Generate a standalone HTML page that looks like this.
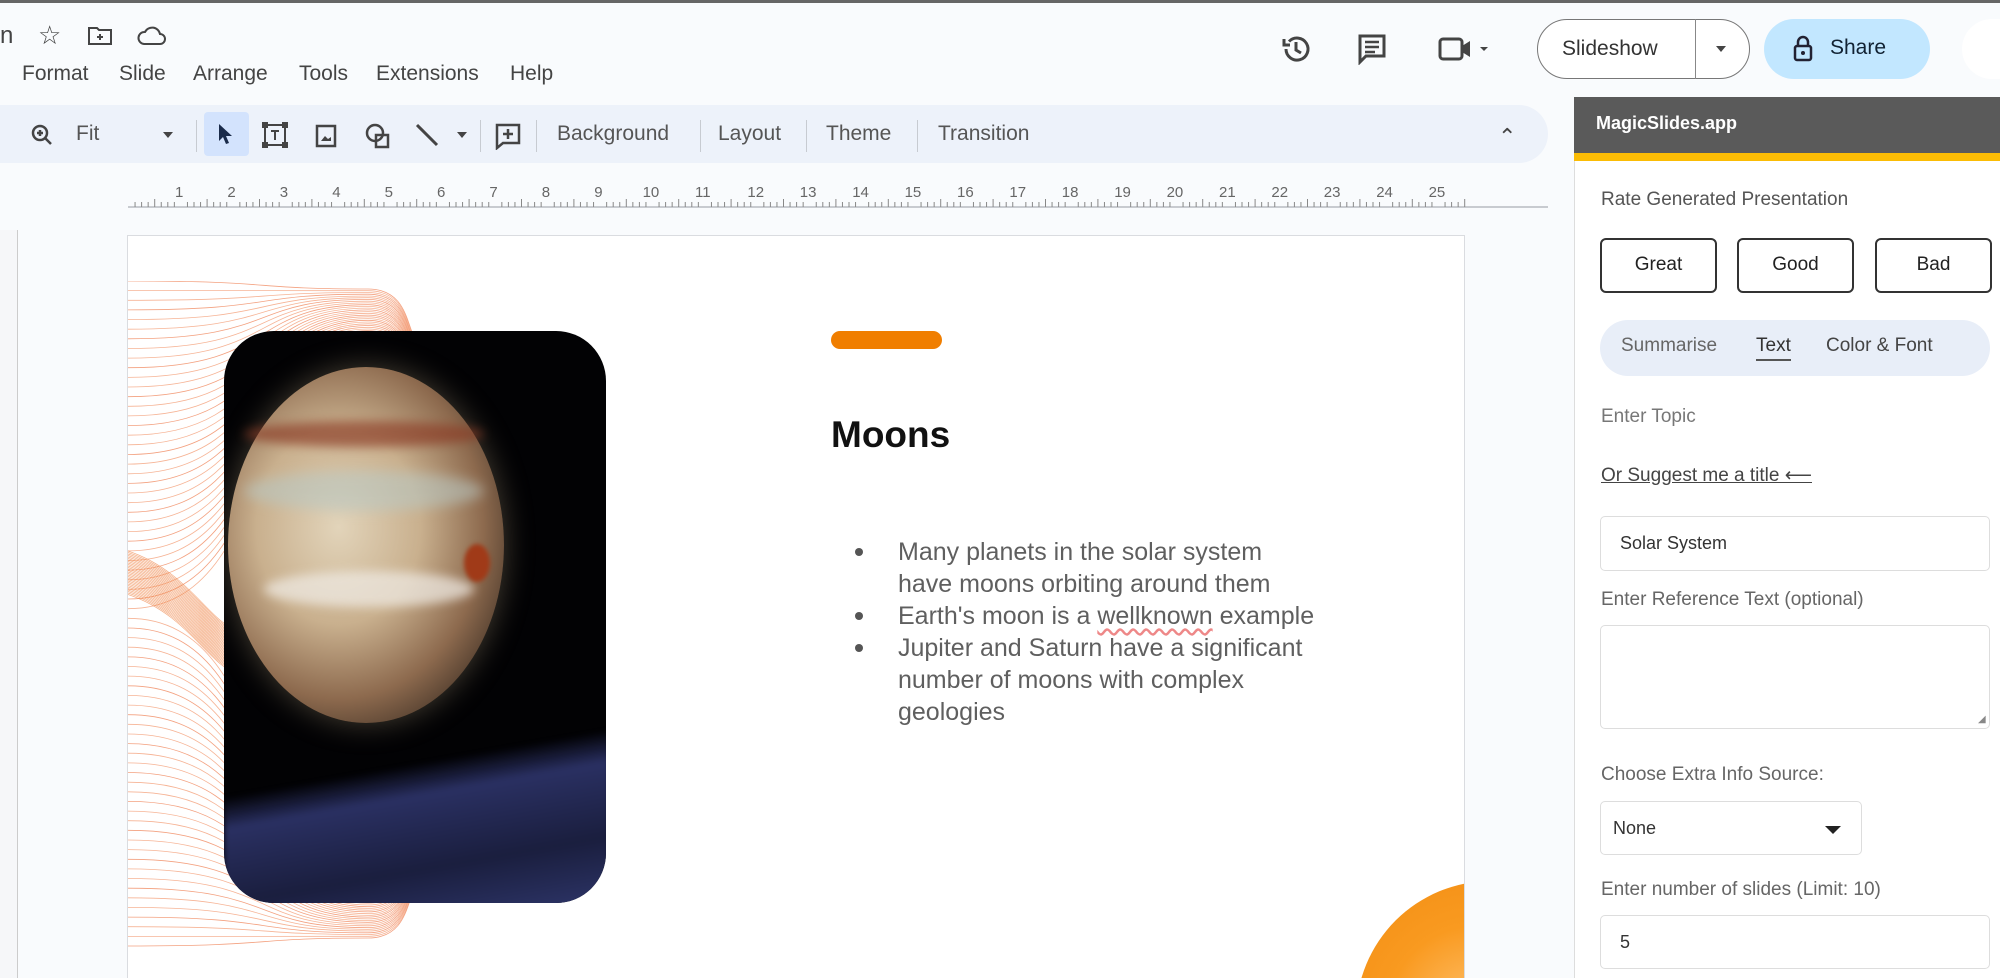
<!DOCTYPE html>
<html><head><meta charset="utf-8">
<style>
*{margin:0;padding:0;box-sizing:border-box}
html,body{width:2000px;height:978px;overflow:hidden}
body{background:#f9fbfd;font-family:"Liberation Sans",Arial,sans-serif;position:relative;color:#3c4043}
.a{position:absolute}
.menu{top:62px;font-size:21px;color:#444}
.tb{top:122px;font-size:21px;color:#555}
.sep{position:absolute;top:120px;width:1px;height:32px;background:#c7cbd1}
.rn{position:absolute;top:184px;font-size:15px;color:#666}
.pl{font-size:19px;color:#555;position:absolute;left:1601px}
.btn{position:absolute;top:238px;width:117px;height:55px;border:2.5px solid #333;border-radius:6px;font-size:19px;color:#222;text-align:center;line-height:50px;background:#fff}
.inp{position:absolute;left:1600px;width:390px;border:1px solid #ddd;border-radius:5px;background:#fff;font-size:18px;color:#333;padding-left:19px}
.bul{position:absolute;left:770px;font-size:25px;color:#5f5f5f;line-height:32px;white-space:nowrap}
.dot{position:absolute;left:727px;width:8px;height:8px;border-radius:50%;background:#555}
</style></head><body>
<div class="a" style="left:0;top:0;width:2000px;height:3px;background:#666"></div>
<div class="a" style="left:0;top:22px;font-size:24px;color:#444">n</div>
<div class="a" style="left:38px;top:20px;font-size:26px;color:#444">☆</div>
<svg class="a" style="left:87px;top:24px" width="26" height="22" viewBox="0 0 26 22"><path d="M2 4h8l2 2h12v14H2z" fill="none" stroke="#444" stroke-width="2"/><path d="M13 10v6M10 13h6" stroke="#444" stroke-width="2"/></svg>
<svg class="a" style="left:136px;top:24px" width="30" height="22" viewBox="0 0 30 22"><path d="M8 20h16a5 5 0 0 0 0-10 8 8 0 0 0-15-2 6 6 0 0 0-1 12z" fill="none" stroke="#444" stroke-width="2"/></svg>
<div class="a menu" style="left:22px">Format</div>
<div class="a menu" style="left:119px">Slide</div>
<div class="a menu" style="left:193px">Arrange</div>
<div class="a menu" style="left:299px">Tools</div>
<div class="a menu" style="left:376px">Extensions</div>
<div class="a menu" style="left:510px">Help</div>
<svg class="a" style="left:1280px;top:33px" width="32" height="32" viewBox="0 0 32 32"><path d="M6 16a11 11 0 1 0 3-7.5" fill="none" stroke="#444" stroke-width="3"/><path d="M4 6v6h6" fill="none" stroke="#444" stroke-width="3"/><path d="M16 9v8l5 3" fill="none" stroke="#444" stroke-width="3"/></svg>
<svg class="a" style="left:1357px;top:33px" width="30" height="32" viewBox="0 0 30 32"><path d="M3 3h24v20H9l-6 6z" fill="none" stroke="#444" stroke-width="3"/><path d="M8 9h14M8 14h14M8 19h10" stroke="#444" stroke-width="2.5"/></svg>
<svg class="a" style="left:1438px;top:36px" width="54" height="26" viewBox="0 0 54 26"><rect x="2" y="3" width="22" height="20" rx="3" fill="none" stroke="#444" stroke-width="3"/><path d="M24 10l8-5v16l-8-5z" fill="#444"/><path d="M42 11h8l-4 4z" fill="#444"/></svg>
<div class="a" style="left:1537px;top:19px;width:213px;height:60px;border:1.5px solid #777;border-radius:30px;background:#fff"></div>
<div class="a" style="left:1695px;top:19px;width:1px;height:60px;background:#888"></div>
<div class="a" style="left:1562px;top:37px;font-size:21px;color:#333">Slideshow</div>
<div class="a" style="left:1716px;top:46px;width:0;height:0;border-left:5px solid transparent;border-right:5px solid transparent;border-top:6px solid #444"></div>
<div class="a" style="left:1764px;top:19px;width:166px;height:60px;border-radius:30px;background:#c2e7ff"></div>
<svg class="a" style="left:1793px;top:34px" width="20" height="28" viewBox="0 0 20 28"><path d="M5 12V8a5 5 0 0 1 10 0v4" fill="none" stroke="#223" stroke-width="2.5"/><rect x="2" y="12" width="16" height="14" rx="2" fill="none" stroke="#223" stroke-width="2.5"/><circle cx="10" cy="19" r="2" fill="#223"/></svg>
<div class="a" style="left:1830px;top:36px;font-size:21px;color:#123">Share</div>
<div class="a" style="left:1962px;top:19px;width:70px;height:60px;border-radius:30px;background:#fff"></div>
<div class="a" style="left:-40px;top:105px;width:1588px;height:58px;border-radius:29px;background:#edf2fa"></div>
<svg class="a" style="left:30px;top:123px" width="24" height="24" viewBox="0 0 24 24"><circle cx="10" cy="10" r="7" fill="none" stroke="#444" stroke-width="2.5"/><path d="M15 15l6 6M7 10h6M10 7v6" stroke="#444" stroke-width="2.5"/></svg>
<div class="a tb" style="left:76px">Fit</div>
<div class="a" style="left:163px;top:132px;border-left:5px solid transparent;border-right:5px solid transparent;border-top:6px solid #444"></div>
<div class="sep" style="left:196px"></div>
<div class="a" style="left:204px;top:112px;width:45px;height:44px;background:#d3e3fd;border-radius:4px"></div>
<svg class="a" style="left:216px;top:122px" width="20" height="24" viewBox="0 0 20 24"><path d="M3 2l13 12h-6l3 7-3 1-3-7-4 4z" fill="#1a2b4a"/></svg>
<svg class="a" style="left:261px;top:121px" width="28" height="28" viewBox="0 0 28 28"><rect x="4" y="4" width="20" height="20" fill="none" stroke="#444" stroke-width="2"/><rect x="1" y="1" width="6" height="6" fill="#444"/><rect x="21" y="1" width="6" height="6" fill="#444"/><rect x="1" y="21" width="6" height="6" fill="#444"/><rect x="21" y="21" width="6" height="6" fill="#444"/><path d="M10 10h8M14 10v9" stroke="#444" stroke-width="2"/></svg>
<svg class="a" style="left:315px;top:124px" width="22" height="24" viewBox="0 0 22 24"><rect x="2" y="2" width="18" height="20" fill="none" stroke="#444" stroke-width="2.5"/><path d="M6 17l4-5 3 3 3-2v4z" fill="#444"/></svg>
<svg class="a" style="left:364px;top:122px" width="28" height="28" viewBox="0 0 28 28"><circle cx="11" cy="11" r="8" fill="none" stroke="#444" stroke-width="2.5"/><rect x="12" y="13" width="12" height="12" fill="none" stroke="#444" stroke-width="2.5"/></svg>
<svg class="a" style="left:414px;top:122px" width="26" height="26" viewBox="0 0 26 26"><path d="M3 3l20 20" stroke="#444" stroke-width="3"/></svg>
<div class="a" style="left:457px;top:132px;border-left:5px solid transparent;border-right:5px solid transparent;border-top:6px solid #444"></div>
<div class="sep" style="left:480px"></div>
<svg class="a" style="left:494px;top:122px" width="28" height="28" viewBox="0 0 28 28"><path d="M3 3h22v18H9l-6 5z" fill="none" stroke="#444" stroke-width="2.5"/><path d="M14 7v10M9 12h10" stroke="#444" stroke-width="2.5"/></svg>
<div class="sep" style="left:536px"></div>
<div class="a tb" style="left:557px">Background</div>
<div class="sep" style="left:700px"></div>
<div class="a tb" style="left:718px">Layout</div>
<div class="sep" style="left:806px"></div>
<div class="a tb" style="left:826px">Theme</div>
<div class="sep" style="left:917px"></div>
<div class="a tb" style="left:938px">Transition</div>
<div class="a" style="left:1498px;top:124px;font-size:22px;color:#444">&#8963;</div>
<div class="a" style="left:128px;top:206px;width:1420px;height:2px;background:#c8cbd0"></div>
<svg class="a" style="left:128px;top:196px" width="1340" height="12" id="rt"></svg>
<div id="rn"></div>
<div class="a" style="left:0;top:230px;width:18px;height:748px;border-right:1px solid #ccc;background:#f6f7f9"></div>
<div class="a" style="left:127px;top:235px;width:1338px;height:743px;background:#fff;border:1px solid #dadce0;border-bottom:none;overflow:hidden">
<svg class="a" style="left:0;top:45px" width="300" height="670" id="wv"></svg>
<div class="a" style="left:96px;top:95px;width:382px;height:572px;border-radius:50px;overflow:hidden;background:#020204">
 <div class="a" style="left:4px;top:36px;width:276px;height:356px;border-radius:50%;background:radial-gradient(ellipse at 40% 45%,#e2d4ba 0%,#c9b08e 35%,#8d6a4e 62%,#3a2c22 85%,#0a0806 100%);box-shadow:0 0 30px rgba(200,180,140,.35)"></div>
 <div class="a" style="left:20px;top:90px;width:240px;height:26px;background:#8a3a24;opacity:.65;border-radius:50%;filter:blur(5px)"></div>
 <div class="a" style="left:20px;top:140px;width:240px;height:40px;background:#b8c8c4;opacity:.55;border-radius:50%;filter:blur(6px)"></div>
 <div class="a" style="left:40px;top:240px;width:210px;height:36px;background:#f0ece6;opacity:.7;border-radius:50%;filter:blur(5px)"></div>
 <div class="a" style="left:240px;top:213px;width:26px;height:38px;background:#a03a18;border-radius:50%;filter:blur(2px)"></div>
 <div class="a" style="left:0;top:386px;width:386px;height:200px;background:linear-gradient(170deg,transparent 0%,transparent 30%,#2a3062 42%,#1a1e3e 70%,#30386e 100%);filter:blur(3px)"></div>
</div>
<div class="a" style="left:703px;top:95px;width:111px;height:18px;border-radius:9px;background:#f07e00"></div>
<div class="a" style="left:703px;top:178px;font-size:37px;font-weight:bold;color:#111">Moons</div>
<div class="dot" style="top:312px"></div><div class="dot" style="top:376px"></div><div class="dot" style="top:408px"></div>
<div class="bul" style="top:300px">Many planets in the solar system<br>have moons orbiting around them<br>Earth's moon is a <span style="text-decoration:underline wavy #e88;text-underline-offset:4px">wellknown</span> example<br>Jupiter and Saturn have a significant<br>number of moons with complex<br>geologies</div>
<div class="a" style="left:1228px;top:645px;width:270px;height:270px;border-radius:50%;background:radial-gradient(circle at 45% 50%,#ffc371 0%,#f99a20 45%,#f08a10 100%)"></div>
</div>
<div class="a" style="left:1574px;top:97px;width:426px;height:881px;background:#fff;border-left:1px solid #ddd"></div>
<div class="a" style="left:1574px;top:97px;width:426px;height:56px;background:#5a5a5a"></div>
<div class="a" style="left:1574px;top:153px;width:426px;height:8px;background:#fbbc05"></div>
<div class="a" style="left:1596px;top:113px;font-size:18px;font-weight:bold;color:#fff">MagicSlides.app</div>
<div class="pl" style="top:189px">Rate Generated Presentation</div>
<div class="btn" style="left:1600px">Great</div>
<div class="btn" style="left:1737px">Good</div>
<div class="btn" style="left:1875px">Bad</div>
<div class="a" style="left:1600px;top:320px;width:390px;height:56px;border-radius:28px;background:#e8eef8"></div>
<div class="a" style="left:1621px;top:335px;font-size:19px;color:#666">Summarise</div>
<div class="a" style="left:1756px;top:335px;font-size:19px;color:#333;border-bottom:2px solid #555;padding-bottom:2px">Text</div>
<div class="a" style="left:1826px;top:335px;font-size:19px;color:#444">Color &amp; Font</div>
<div class="pl" style="top:406px;color:#777">Enter Topic</div>
<div class="pl" style="top:464px;text-decoration:underline;color:#444">Or Suggest me a title ⟵</div>
<div class="inp" style="top:516px;height:55px;line-height:53px">Solar System</div>
<div class="pl" style="top:589px;color:#666">Enter Reference Text (optional)</div>
<div class="inp" style="top:625px;height:104px"></div>
<div class="a" style="left:1978px;top:714px;font-size:10px;color:#888">◢</div>
<div class="pl" style="top:764px;color:#666">Choose Extra Info Source:</div>
<div class="inp" style="top:801px;height:54px;width:262px;line-height:52px;padding-left:12px">None</div>
<div class="a" style="left:1825px;top:826px;border-left:8px solid transparent;border-right:8px solid transparent;border-top:8px solid #222"></div>
<div class="pl" style="top:879px;color:#666">Enter number of slides (Limit: 10)</div>
<div class="inp" style="top:915px;height:54px;line-height:52px">5</div>
<script>
var rt=document.getElementById('rt'),s='';
for(var i=0;i<=52*26;i+=6.55){var h=(Math.round(i/6.55)%8==0)?0:(Math.round(i/6.55)%4==0?8:5);if(h)s+='<line x1="'+(i+0.5)+'" y1="'+(11-h)+'" x2="'+(i+0.5)+'" y2="11" stroke="#888" stroke-width="1"/>';}
rt.innerHTML=s;var rn='';
for(var k=1;k<=25;k++){rn+='<div class="rn" style="left:'+(175+(k-1)*52.4-(k>9?4:0))+'px">'+k+'</div>';}
document.getElementById('rn').innerHTML=rn;
var wv=document.getElementById('wv'),p='';
for(var j=0;j<70;j++){var t=j/69;var y0=t*665;var ye;
if(t<0.5){ye=8+t*2*60;}else{ye=597+(t-0.5)*2*60;}
var d='M0 '+y0.toFixed(1)+' C 150 '+y0.toFixed(1)+', 120 '+ye.toFixed(1)+', 240 '+ye.toFixed(1)+' C 290 '+ye.toFixed(1)+', 275 '+(t<0.5?ye+60:ye-60).toFixed(1)+', 300 '+(t<0.5?ye+60:ye-60).toFixed(1);
var c=j%3==0?'#f08a60':'#f4a07a';
p+='<path d="'+d+'" fill="none" stroke="'+c+'" stroke-width="0.8" opacity="0.8"/>';}
for(var j=0;j<30;j++){var y=310+j*1.5;p+='<path d="M0 '+(y-40)+' C 60 '+(y-20)+', 80 '+(y+30)+', 110 '+(y+40)+'" fill="none" stroke="#f08a50" stroke-width="0.7" opacity="0.7"/>';}
wv.innerHTML=p;
</script>
</body></html>
